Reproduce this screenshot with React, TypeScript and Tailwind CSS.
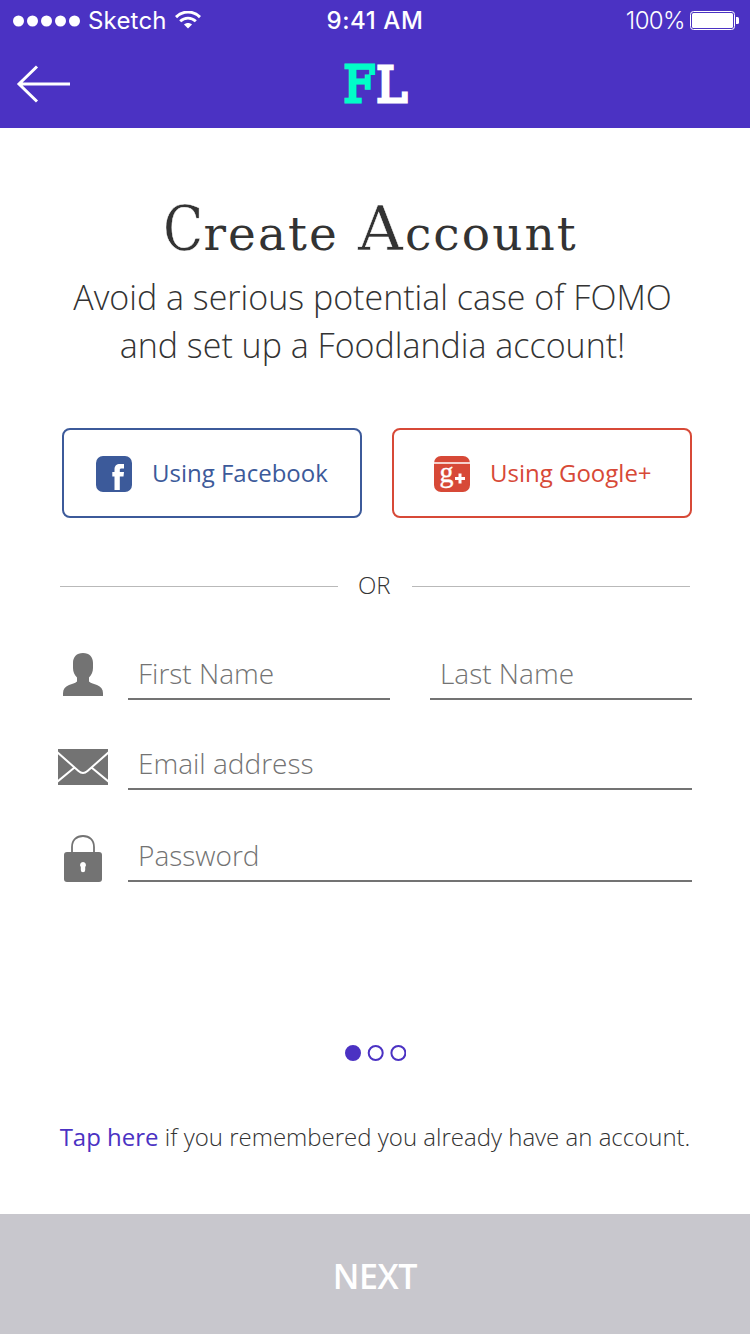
import React from "react";

function StatusBar() {
  return (
    <div className="flex h-10 items-center justify-between font-[Inter,sans-serif] text-[24px] leading-10 text-white">
      <div className="flex w-[250px] items-center pl-[13px]">
        <svg className="mt-px" width="67" height="12" viewBox="0 0 67 12" fill="currentColor">
          {[5.5, 19.5, 33.5, 47.5, 61.5].map((cx) => (
            <circle key={cx} cx={cx} cy="6" r="5.5" />
          ))}
        </svg>
        <span className="ml-2 w-[78px] whitespace-nowrap pt-0.5 tracking-[0.2px]">Sketch</span>
        <svg className="ml-[9px]" width="26" height="18" viewBox="0 0 26 18" fill="none" stroke="currentColor">
          <path d="M1 6.1C7.8-.6 18.2-.6 25 6.1" strokeWidth="3" />
          <path d="M5.2 10.3c4.5-4.3 11.1-4.3 15.6 0" strokeWidth="2.9" />
          <path d="M13 17.5l-4-4c2.3-2 5.7-2 8 0z" fill="currentColor" stroke="none" />
        </svg>
      </div>
      <span className="whitespace-nowrap pt-0.5 font-medium tracking-[0.6px]">9:41 AM</span>
      <div className="flex w-[250px] items-center justify-end pr-[11px]">
        <span className="whitespace-nowrap pt-0.5 font-light tracking-[-0.6px]">100%</span>
        <svg className="ml-[5px]" width="49" height="19" viewBox="0 0 49 19" fill="currentColor">
          <rect x=".5" y=".5" width="44" height="18" rx="3" fill="none" stroke="currentColor" />
          <rect x="2" y="2" width="41" height="15" rx="1.5" />
          <path d="M46 6h1.5q1.5 0 1.5 1.500v4q0 1.500-1.500 1.500H46z" />
        </svg>
      </div>
    </div>
  );
}

function NavBar() {
  return (
    <div className="grid h-[88px] grid-cols-3 items-center">
      <svg className="ml-4" width="56" height="38" viewBox="0 0 56 38" fill="none" stroke="white" strokeWidth="3">
        <path d="M21 1.500L3 19l18 17.500M3 19h51" />
      </svg>
      <svg className="mx-auto" width="68" height="80" viewBox="0 0 68 80" fontFamily="DejaVu Serif, serif" fontSize="49.500" strokeWidth="3.200">
        <text x="2.400" y="58.400" fill="#00fdc8" stroke="#00fdc8" textLength="32" lengthAdjust="spacingAndGlyphs">F</text>
        <text x="35.200" y="57.800" fill="#fff" stroke="#fff" fontSize="48" textLength="31" lengthAdjust="spacingAndGlyphs">L</text>
      </svg>
    </div>
  );
}

function FacebookIcon() {
  return (
    <svg className="mt-0.5" width="36" height="36" viewBox="0 0 36 36">
      <rect width="36" height="36" rx="7" fill="#3c5a9a" />
      <path d="M18.500 34V20.500H16.300V16h2.200v-2.500C18.500 9.800 20.500 8 24 8h4v4.500h-2.500c-1.200 0-1.700.5-1.700 1.500v2H28l-.5 4.500h-3.700V34z" fill="#fff" />
    </svg>
  );
}

function GoogleIcon() {
  return (
    <svg className="mt-0.5" width="36" height="36" viewBox="0 0 36 36">
      <rect width="36" height="36" rx="7" fill="#d74937" />
      <path d="M0 7h36" stroke="#fff" strokeWidth="1.300" />
      <text x="5.500" y="25.500" fill="#fff" stroke="#fff" strokeWidth=".4" fontFamily="Liberation Serif, serif" fontSize="30" textLength="14" lengthAdjust="spacingAndGlyphs">g</text>
      <path d="M21 22.500h10M26 17.500v10" stroke="#fff" strokeWidth="3" />
    </svg>
  );
}

function PersonIcon() {
  return (
    <svg className="ml-[3px]" width="44" height="44" viewBox="0 0 44 44" fill="#737373">
      <path d="M22 0c6.500 0 10 4 10 10v5c0 4-1.500 7-4 9.500V28.500c2 1.800 5 2.300 8 3.500 4 1.500 6 4.500 6 8.300V43H2v-2.700c0-3.800 2-6.800 6-8.300 3-1.200 6-1.700 8-3.500V24.500c-2.500-2.500-4-5.500-4-9.500v-5C12 4 15.500 0 22 0z" />
    </svg>
  );
}

function MailIcon() {
  return (
    <svg width="50" height="36" viewBox="0 0 50 36">
      <path fill="#737373" d="M0 0h50v36H0z" />
      <path d="M-1 3l21.500 19q4.500 4 9 0L51 3M-1 33l17.500-14.500M51 33L33.500 18.500" fill="none" stroke="#fff" strokeWidth="2" />
    </svg>
  );
}

function LockIcon() {
  return (
    <svg className="ml-1.5" width="38" height="48" viewBox="0 0 38 48">
      <path d="M8 18v-6C8 5 12.500 1 19 1s11 4 11 11v6" fill="none" stroke="#737373" strokeWidth="1.800" />
      <rect y="17" width="38" height="30" rx="3" fill="#737373" />
      <path d="M19 27a3 3 0 0 1 2.200 5v3a2.200 2.200 0 0 1-4.400 0v-3A3 3 0 0 1 19 27z" fill="#fff" />
    </svg>
  );
}

function Field({ label, className = "" }: { label: string; className?: string }) {
  return (
    <div className={`h-[50px] border-b-2 border-[#737373] pl-2.5 text-[28px] font-light leading-[46px] text-[#737373] ${className}`}>
      <span className="whitespace-nowrap">{label}</span>
    </div>
  );
}

export default function App() {
  return (
    <div className="flex h-[1334px] w-[750px] flex-col overflow-hidden bg-white font-['Open_Sans',sans-serif] text-[#333]">
      <header className="h-32 shrink-0 bg-[#4b32c3]">
        <StatusBar />
        <NavBar />
      </header>
      <main className="flex flex-1 flex-col">
        <h1 className="mt-[61px] h-[84px] whitespace-nowrap pl-[163px] font-['DejaVu_Serif',serif] text-[47px] leading-[80px] tracking-[2.1px]">
          <span className="-mr-[7px] inline-block origin-left scale-x-[0.85] text-[62px] tracking-normal [-webkit-text-stroke:0.5px_white]">C</span>reate{" "}
          <span className="ml-0.5 text-[62px] [-webkit-text-stroke:0.5px_white]">A</span>ccount
        </h1>
        <p className="whitespace-nowrap pr-[5px] text-center text-[34px] font-light leading-12">
          Avoid a serious potential case of FOMO
          <br />
          and set up a Foodlandia account!
        </p>
        <div className="mt-[59px] flex gap-[30px] pl-[62px] text-[24px]">
          <button className="flex h-[90px] w-[300px] items-center gap-5 rounded-lg border-2 border-[#3c5a9a] pl-8 text-[#3c5a9a]">
            <FacebookIcon />
            <span className="whitespace-nowrap">Using Facebook</span>
          </button>
          <button className="flex h-[90px] w-[300px] items-center gap-5 rounded-lg border-2 border-[#d74937] pl-10 text-[#d74937]">
            <GoogleIcon />
            <span className="whitespace-nowrap">Using Google+</span>
          </button>
        </div>
        <div className="mx-[60px] mt-[52px] flex h-8 items-center gap-5">
          <div className="h-px flex-1 bg-[#b9b9b9]" />
          <span className="w-[34px] pb-0.5 pr-0.5 text-center text-[24px] font-light leading-8">OR</span>
          <div className="h-px flex-1 bg-[#b9b9b9]" />
        </div>
        <form className="ml-[58px] mt-[48px] flex w-[634px] flex-col">
          <div className="flex h-[50px]">
            <div className="w-[70px] pt-[3px]"><PersonIcon /></div>
            <Field label="First Name" className="w-[262px]" />
            <Field label="Last Name" className="ml-10 w-[262px]" />
          </div>
          <div className="mt-10 flex h-[50px]">
            <div className="w-[70px] pt-[9px]"><MailIcon /></div>
            <Field label="Email address" className="flex-1" />
          </div>
          <div className="mt-[42px] flex h-[50px]">
            <div className="w-[70px] pt-[3px]"><LockIcon /></div>
            <Field label="Password" className="flex-1" />
          </div>
        </form>
        <svg className="mx-auto mt-[162px]" width="62" height="18" viewBox="0 0 62 18" fill="none" stroke="#4b32c3" strokeWidth="2">
          <circle cx="9" cy="9" r="7" fill="#4b32c3" />
          <circle cx="31.700" cy="9" r="7" />
          <circle cx="54.400" cy="9" r="7" />
        </svg>
        <p className="mt-[57px] whitespace-nowrap text-center text-[24px] font-light leading-9">
          <a className="font-normal text-[#4b32c3]">Tap here</a> if you remembered you already have an account.
        </p>
      </main>
      <button className="h-[120px] shrink-0 bg-[#c8c7cd] pt-1 text-[34px] font-semibold tracking-[-0.4px] text-white">NEXT</button>
    </div>
  );
}
